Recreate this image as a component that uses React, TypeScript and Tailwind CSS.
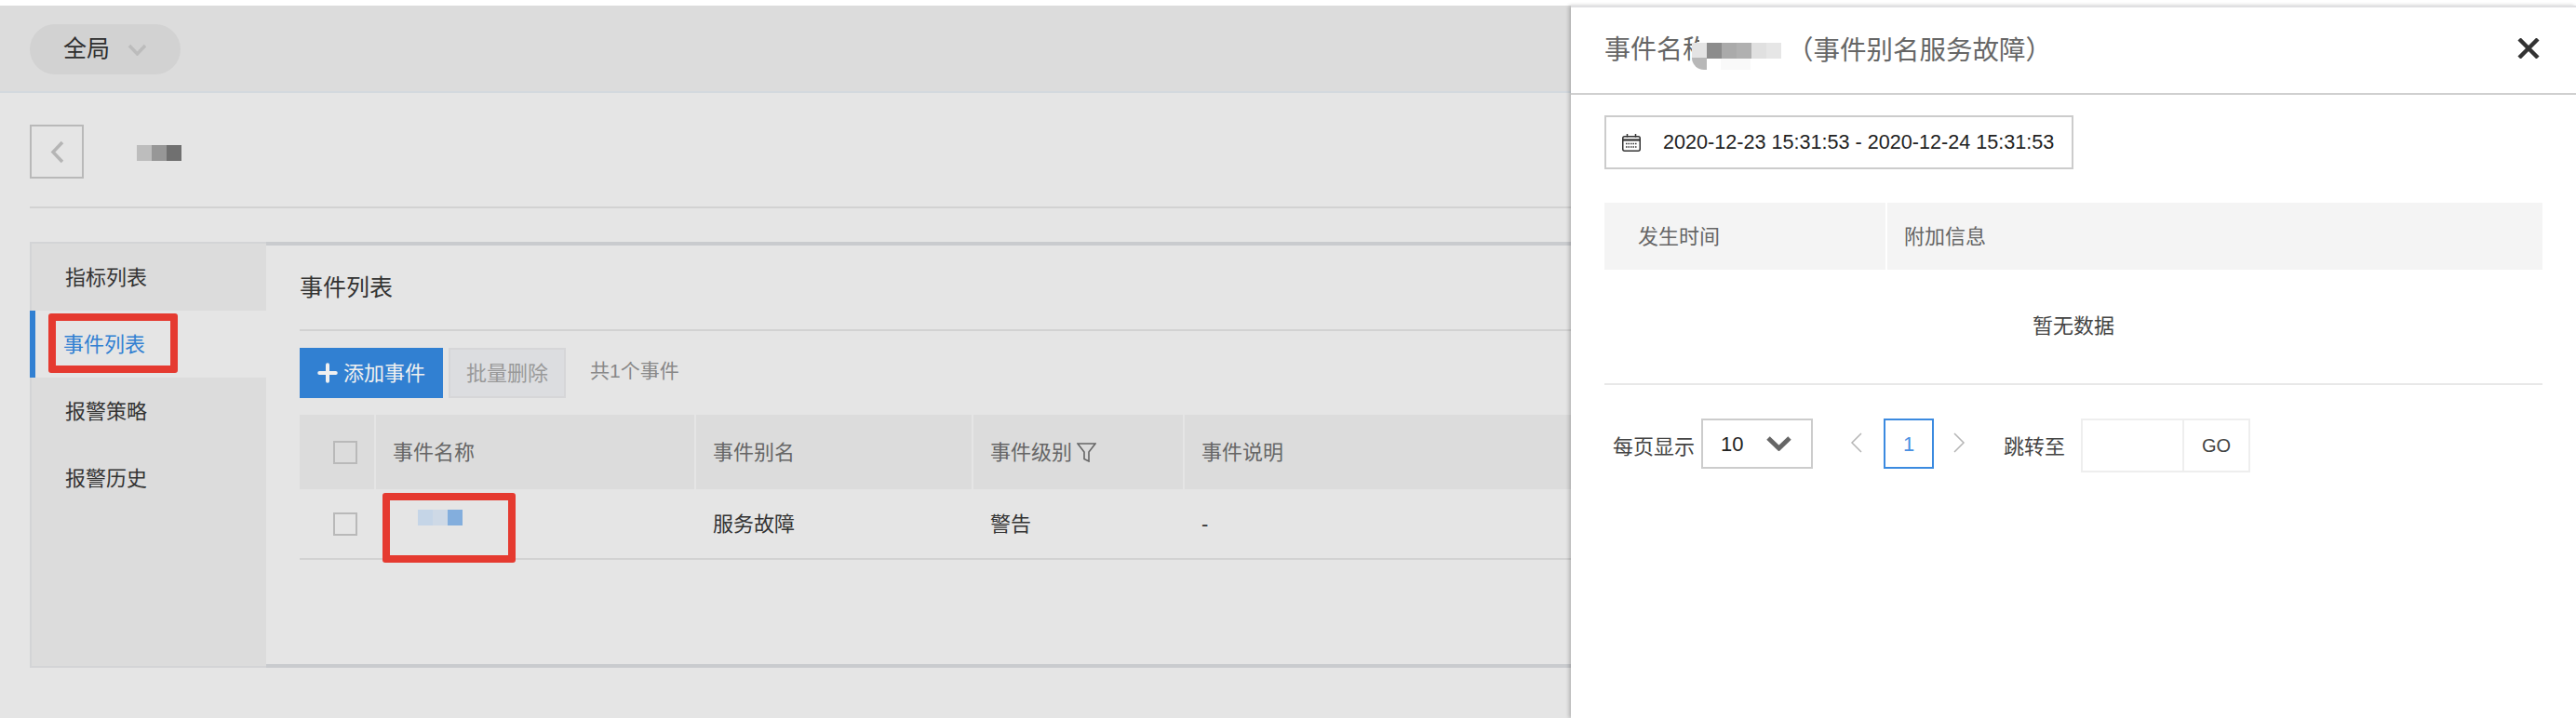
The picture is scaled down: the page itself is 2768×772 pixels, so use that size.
import { Plus } from "lucide-react";

const sideItems = ["指标列表", "事件列表", "报警策略", "报警历史"];

function Chevron({ box, points, width, className }: { box: string; points: string; width: number; className: string }) {
  return (
    <svg viewBox={box} fill="none" stroke="currentColor" strokeWidth={width} className={className}>
      <polyline points={points} />
    </svg>
  );
}

function Mosaic({ colors, className }: { colors: string[]; className: string }) {
  return (
    <div className={"flex " + className}>
      {colors.map((c, i) => (
        <span key={i} className="h-full flex-1" style={{ backgroundColor: c }} />
      ))}
    </div>
  );
}

function Checkbox() {
  return <span className="block h-[25px] w-[26px] border-2 border-[#b9b9b9]" />;
}

function Drawer() {
  return (
    <div className="absolute top-[6px] right-0 bottom-0 w-[1080px] border-t-2 border-[#e0e0e2] bg-white text-[22px] shadow-[-2px_0_4px_rgba(0,0,0,0.22)]">
      <div className="relative flex h-[94px] items-center border-b-2 border-[#d0d0d0] pl-[36px] text-[28px] text-[#666]">
        <span className="w-[112px]">事件名称</span>
        <span className="ml-[84px] text-[28.500px]">（事件别名服务故障）</span>
        <div className="absolute top-[26px] left-[138px] h-[40px] w-[90px] bg-white" />
        <Mosaic
          colors={["#e4e4e4", "#8c8c8c", "#aaaaaa", "#b0b0b0", "#e0e0e0", "#e6e6e6"]}
          className="absolute top-[38px] left-[130px] h-[17px] w-[96px]"
        />
        <div className="absolute top-[54px] left-[130px] h-[13px] w-[16px] rounded-bl-[14px] bg-[#b8b8b8]" />
        <div className="absolute top-[55px] left-[161px] h-[12px] w-[32px] bg-[#f9f9f9]" />
        <svg viewBox="0 0 24 22" className="absolute top-[33px] right-[39px] h-[22px] w-[24px] text-[#333]" fill="none" stroke="currentColor" strokeWidth="4.400">
          <path d="M2 1 22 21M22 1 2 21" />
        </svg>
      </div>
      <div className="px-[36px] pt-[22px]">
        <div className="flex h-[58px] w-[504px] items-center border-2 border-[#cccccc] pl-[17px] text-[21.6px] text-[#222]">
          <svg viewBox="0 0 20 19" className="mr-[24px] h-[19px] w-[20px]" fill="none" stroke="#333" strokeWidth="1.5">
            <rect x="0.750" y="2.750" width="18.500" height="15.500" rx="2" />
            <path d="M0.750 6.500h18.500" strokeWidth="2.200" />
            <path d="M5.500 0v3.500M14.500 0v3.500" />
            <path d="M4 10.500h12M4 14h12" strokeDasharray="1.500 1" strokeWidth="1.400" />
          </svg>
          <span>2020-12-23 15:31:53 - 2020-12-24 15:31:53</span>
        </div>
        <div className="mt-[36px] grid h-[72px] grid-cols-[302px_1fr] gap-x-[2px] text-[#666]">
          <div className="flex items-center bg-[#f4f4f4] pl-[36px]">发生时间</div>
          <div className="flex items-center bg-[#f4f4f4] pl-[18px]">附加信息</div>
        </div>
        <div className="flex h-[124px] items-center justify-center border-b-2 border-[#e8e8e8] pb-[2px] text-[#444]">暂无数据</div>
        <div className="flex items-start pt-[36px] text-[#444]">
          <span className="mt-[14px] ml-[9px] w-[95px]">每页显示</span>
          <div className="flex h-[54px] w-[120px] items-center border-2 border-[#cccccc] pl-[19px] text-[#222]">
            <span>10</span>
            <Chevron box="0 0 27 16" points="2,2 13.500,13 25,2" width={5} className="ml-[25px] h-[16px] w-[27px] text-[#666]" />
          </div>
          <Chevron box="0 0 13 22" points="12,1 2,11 12,21" width={1.500} className="mt-[15px] ml-[40px] h-[22px] w-[13px] text-[#b5b5b5]" />
          <div className="ml-[23px] flex h-[54px] w-[54px] items-center justify-center border-2 border-[#3b8ae0] text-[#4a90e2]">1</div>
          <Chevron box="0 0 13 22" points="1,1 11,11 1,21" width={1.500} className="mt-[15px] ml-[21px] h-[22px] w-[13px] text-[#b5b5b5]" />
          <span className="mt-[14px] ml-[41px] w-[83px]">跳转至</span>
          <div className="flex h-[58px] w-[182px] border-2 border-[#eeeeee]">
            <div className="w-[109px] border-r-2 border-[#eeeeee]" />
            <div className="flex flex-1 items-center justify-center text-[20px]">GO</div>
          </div>
        </div>
      </div>
    </div>
  );
}

export default function App() {
  return (
    <div className="relative h-[772px] w-[2768px] overflow-hidden bg-white pt-[6px] font-['Liberation_Sans','Noto_Sans_CJK_SC',sans-serif] text-[22px] text-[#333]">
      <div className="h-[94px] border-b-2 border-[#d3d9de] bg-[#dcdcdc] px-[32px] pt-[20px]">
        <div className="flex h-[54px] w-[162px] items-center rounded-[27px] bg-[#d2d2d2] pl-[36px] text-[25px] text-[#2f2f2f]">
          全局
          <Chevron box="0 0 21 13" points="2,2 10.500,11 19,2" width={3.500} className="ml-[19px] h-[13px] w-[21px] text-[#bcbcbc]" />
        </div>
      </div>

      <div className="h-[672px] bg-[#e5e5e5] px-[32px]">
        <div className="flex h-[124px] items-start border-b-2 border-[#d2d2d2] pt-[34px]">
          <div className="flex h-[58px] w-[58px] items-center justify-center border-2 border-[#b9b9b9]">
            <Chevron box="0 0 15 25" points="13,2 3,12.500 13,23" width={3.500} className="h-[25px] w-[15px] text-[#b5b5b5]" />
          </div>
          <Mosaic colors={["#bdbdbd", "#979797", "#707070"]} className="mt-[22px] ml-[57px] h-[17px] w-[48px]" />
        </div>

        <div className="mt-[36px] flex h-[458px]">
          <div className="w-[254px] shrink-0 border-t-2 border-b-2 border-l-2 border-[#d3d4d6] bg-[#dcdcdc]">
            {sideItems.map((item, i) =>
              i === 1 ? (
                <div key={item} className="relative -ml-[2px] flex h-[72px] items-center border-l-[6px] border-[#3180d2] bg-[#e5e5e5] pl-[30px] text-[#3180d2]">
                  {item}
                  <div className="absolute top-[3px] left-[14px] h-[64px] w-[139px] rounded-[3px] border-8 border-[#e53a30]" />
                </div>
              ) : (
                <div key={item} className="flex h-[72px] items-center pl-[36px]">
                  {item}
                </div>
              ),
            )}
          </div>

          <div className="flex-1 border-t-4 border-b-4 border-[#c9cbce] pr-[32px] pl-[36px]">
            <div className="flex h-[92px] items-center border-b-2 border-[#d2d2d2] pt-[2px] text-[25px]">事件列表</div>
            <div className="mt-[18px] flex h-[54px] items-center">
              <button className="flex h-[54px] w-[154px] items-center bg-[#3180d2] pl-[15px] text-[#f0f0f0]">
                <Plus size={30} strokeWidth={3.200} className="mr-[2px]" />
                添加事件
              </button>
              <button className="ml-[6px] h-[54px] w-[126px] border-2 border-[#d6d6d8] bg-[#dcdde0] text-[#999]">批量删除</button>
              <span className="ml-[26px] pb-[4px] text-[21px] text-[#888]">共1个事件</span>
            </div>

            <div className="mt-[18px] grid h-[80px] grid-cols-[80px_342px_296px_225px_1fr] gap-x-[2px] text-[#666]">
              <div className="flex items-center justify-center bg-[#dcdcdc] pl-[18px]"><Checkbox /></div>
              <div className="flex items-center bg-[#dcdcdc] pl-[18px]">事件名称</div>
              <div className="flex items-center bg-[#dcdcdc] pl-[18px]">事件别名</div>
              <div className="flex items-center bg-[#dcdcdc] pl-[18px]">
                事件级别
                <svg viewBox="0 0 21 21" className="ml-[5px] h-[21px] w-[21px]" fill="none" stroke="#666" strokeWidth="1.600">
                  <path d="M1 1h19l-7 9v10l-5-2.500v-7.500z" />
                </svg>
              </div>
              <div className="flex items-center bg-[#dcdcdc] pl-[18px]">事件说明</div>
            </div>
            <div className="relative grid h-[76px] grid-cols-[80px_342px_296px_225px_1fr] gap-x-[2px] border-b-2 border-[#d2d2d2]">
              <div className="flex items-center justify-center pl-[18px]"><Checkbox /></div>
              <div className="pt-[22px] pl-[45px]">
                <Mosaic colors={["#c5d5e7", "#ced9e6", "#83aedd"]} className="h-[17px] w-[48px]" />
              </div>
              <div className="flex items-center pl-[18px]">服务故障</div>
              <div className="flex items-center pl-[18px]">警告</div>
              <div className="flex items-center pl-[18px]">-</div>
              <div className="absolute top-[4px] left-[89px] h-[75px] w-[143px] rounded-[3px] border-8 border-[#e53a30]" />
            </div>
          </div>
        </div>
      </div>

      <Drawer />
    </div>
  );
}
